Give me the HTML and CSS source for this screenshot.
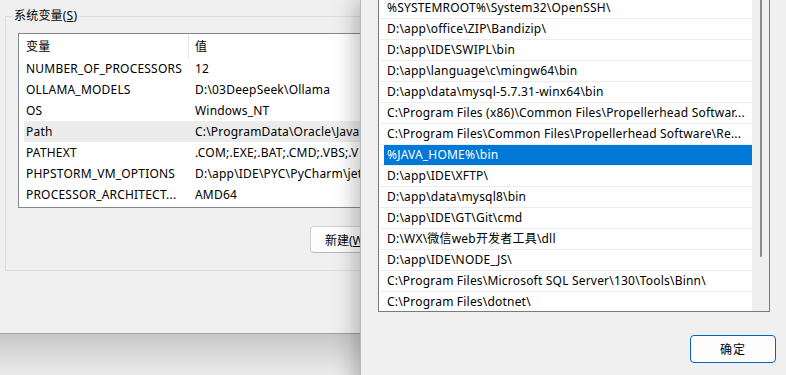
FILE: index.html
```html
<!DOCTYPE html>
<html lang="zh-CN">
<head>
  <meta charset="UTF-8">
  <meta name="viewport" content="width=device-width, initial-scale=1.0">
  <title>环境变量</title>
  <link rel="stylesheet" href="styles.css">
</head>
<body>
  <div class="desktop">

    <!-- 环境变量 (behind) -->
    <div class="window back">
      <fieldset class="group">
        <legend>系统变量(<u>S</u>)</legend>
        <div class="listview">
          <div class="lv-header">
            <div class="lv-col">变量</div>
            <div class="lv-col">值</div>
          </div>
          <div class="lv-row"><span>NUMBER_OF_PROCESSORS</span><span>12</span></div>
          <div class="lv-row"><span>OLLAMA_MODELS</span><span>D:\03DeepSeek\Ollama</span></div>
          <div class="lv-row"><span>OS</span><span>Windows_NT</span></div>
          <div class="lv-row selected"><span>Path</span><span>C:\ProgramData\Oracle\Java</span></div>
          <div class="lv-row"><span>PATHEXT</span><span>.COM;.EXE;.BAT;.CMD;.VBS;.V</span></div>
          <div class="lv-row"><span>PHPSTORM_VM_OPTIONS</span><span>D:\app\IDE\PYC\PyCharm\jet</span></div>
          <div class="lv-row"><span>PROCESSOR_ARCHITECT...</span><span>AMD64</span></div>
        </div>
        <div class="group-actions">
          <button class="btn">新建(<u>W</u>)</button>
        </div>
      </fieldset>
    </div>

    <!-- 编辑环境变量 (front) -->
    <div class="window front">
      <div class="pathlist">
        <div class="path-rows">
          <div class="path-row"><span>%SYSTEMROOT%\System32\OpenSSH\</span></div>
          <div class="path-row"><span>D:\app\office\ZIP\Bandizip\</span></div>
          <div class="path-row"><span>D:\app\IDE\SWIPL\bin</span></div>
          <div class="path-row"><span>D:\app\language\c\mingw64\bin</span></div>
          <div class="path-row"><span>D:\app\data\mysql-5.7.31-winx64\bin</span></div>
          <div class="path-row"><span>C:\Program Files (x86)\Common Files\Propellerhead Softwar...</span></div>
          <div class="path-row"><span>C:\Program Files\Common Files\Propellerhead Software\Re...</span></div>
          <div class="path-row active"><span>%JAVA_HOME%\bin</span></div>
          <div class="path-row"><span>D:\app\IDE\XFTP\</span></div>
          <div class="path-row"><span>D:\app\data\mysql8\bin</span></div>
          <div class="path-row"><span>D:\app\IDE\GT\Git\cmd</span></div>
          <div class="path-row"><span>D:\WX\微信web开发者工具\dll</span></div>
          <div class="path-row"><span>D:\app\IDE\NODE_JS\</span></div>
          <div class="path-row"><span>C:\Program Files\Microsoft SQL Server\130\Tools\Binn\</span></div>
          <div class="path-row"><span>C:\Program Files\dotnet\</span></div>
        </div>
        <div class="scrollbar">
          <div class="thumb"></div>
        </div>
      </div>
      <div class="footer">
        <button class="btn primary">确定</button>
      </div>
    </div>

  </div>
</body>
</html>
```

FILE: styles.css
```css
* {
  box-sizing: border-box;
  margin: 0;
  padding: 0;
}

body {
  font-family: 'Noto Sans', 'Noto Sans CJK SC', sans-serif;
  font-size: 12px;
  letter-spacing: 0.2px;
  color: #000;
  overflow: hidden;
}

.desktop {
  position: relative;
  width: 786px;
  height: 375px;
  overflow: hidden;
  background: linear-gradient(to bottom, #f0f0f0 0, #f0f0f0 334px, #c8c8c8 334px, #ebebeb 375px);
}

.window {
  position: absolute;
  top: 0;
  background: #f0f0f0;
}

/* back window */

.back {
  left: 0;
  width: 430px;
  height: 334px;
  border-bottom: 1px solid #a0a0a0;
  padding: 8px 0 0 5px;
}

.group {
  border: 1px solid #dcdcdc;
  padding: 0 0 17px 6px;
  width: 460px;
}

.group legend {
  padding: 0 2px;
  line-height: 16px;
}

.listview {
  margin: 9px 0 0 6px;
  height: 175px;
  background: #fff;
  border: 1px solid #828790;
  overflow: hidden;
}

.lv-header {
  display: grid;
  grid-template-columns: 170px 1fr;
  height: 24px;
}

.lv-col {
  line-height: 24px;
  padding: 1px 0 0 6px;
}

.lv-col:first-child {
  padding-left: 7px;
  border-right: 1px solid #e5e5e5;
}

.lv-row {
  display: grid;
  grid-template-columns: 169px 1fr;
  height: 21px;
  line-height: 21px;
  margin-left: 5px;
  white-space: nowrap;
}

.lv-row span {
  padding-left: 2px;
  overflow: hidden;
}

.lv-row.selected {
  background: #ececec;
}

.group-actions {
  display: flex;
  gap: 8px;
  margin: 18px 0 0 298px;
}

.btn {
  height: 27px;
  min-width: 86px;
  padding: 0 14px;
  font: inherit;
  color: #000;
  background: #fdfdfd;
  border: 1px solid #d0d0d0;
  border-bottom-color: #b8b8b8;
  border-radius: 4px;
}

.group-actions .btn {
  text-align: left;
}

/* front window */

.front {
  left: 360px;
  width: 426px;
  height: 400px;
  border-left: 1px solid #b8b8b8;
  box-shadow: -4px 0 22px rgba(0, 0, 0, 0.28);
}

.pathlist {
  display: flex;
  width: 392px;
  height: 315px;
  margin: -3px 0 0 17px;
  background: #fff;
  border: 1px solid #7a7a7a;
  overflow: hidden;
}

.path-rows {
  flex: 1;
  padding-left: 1px;
}

.path-row {
  height: 21px;
  border-bottom: 1px solid #ececec;
  white-space: nowrap;
  overflow: hidden;
}

.path-row span {
  display: block;
  margin-left: 4px;
  padding-left: 3px;
  line-height: 20px;
}

.path-row.active span {
  background: #0078d7;
  color: #fff;
}

.scrollbar {
  width: 17px;
  background: #efefef;
}

.thumb {
  width: 2px;
  height: 259px;
  margin-left: 8px;
  background: #8a8a8a;
  border-radius: 1px;
}

.footer {
  display: flex;
  margin: 23px 0 0 329px;
}

.btn.primary {
  height: 28px;
  letter-spacing: 1px;
  border: 1px solid #0067c0;
  border-radius: 4px;
}
```
